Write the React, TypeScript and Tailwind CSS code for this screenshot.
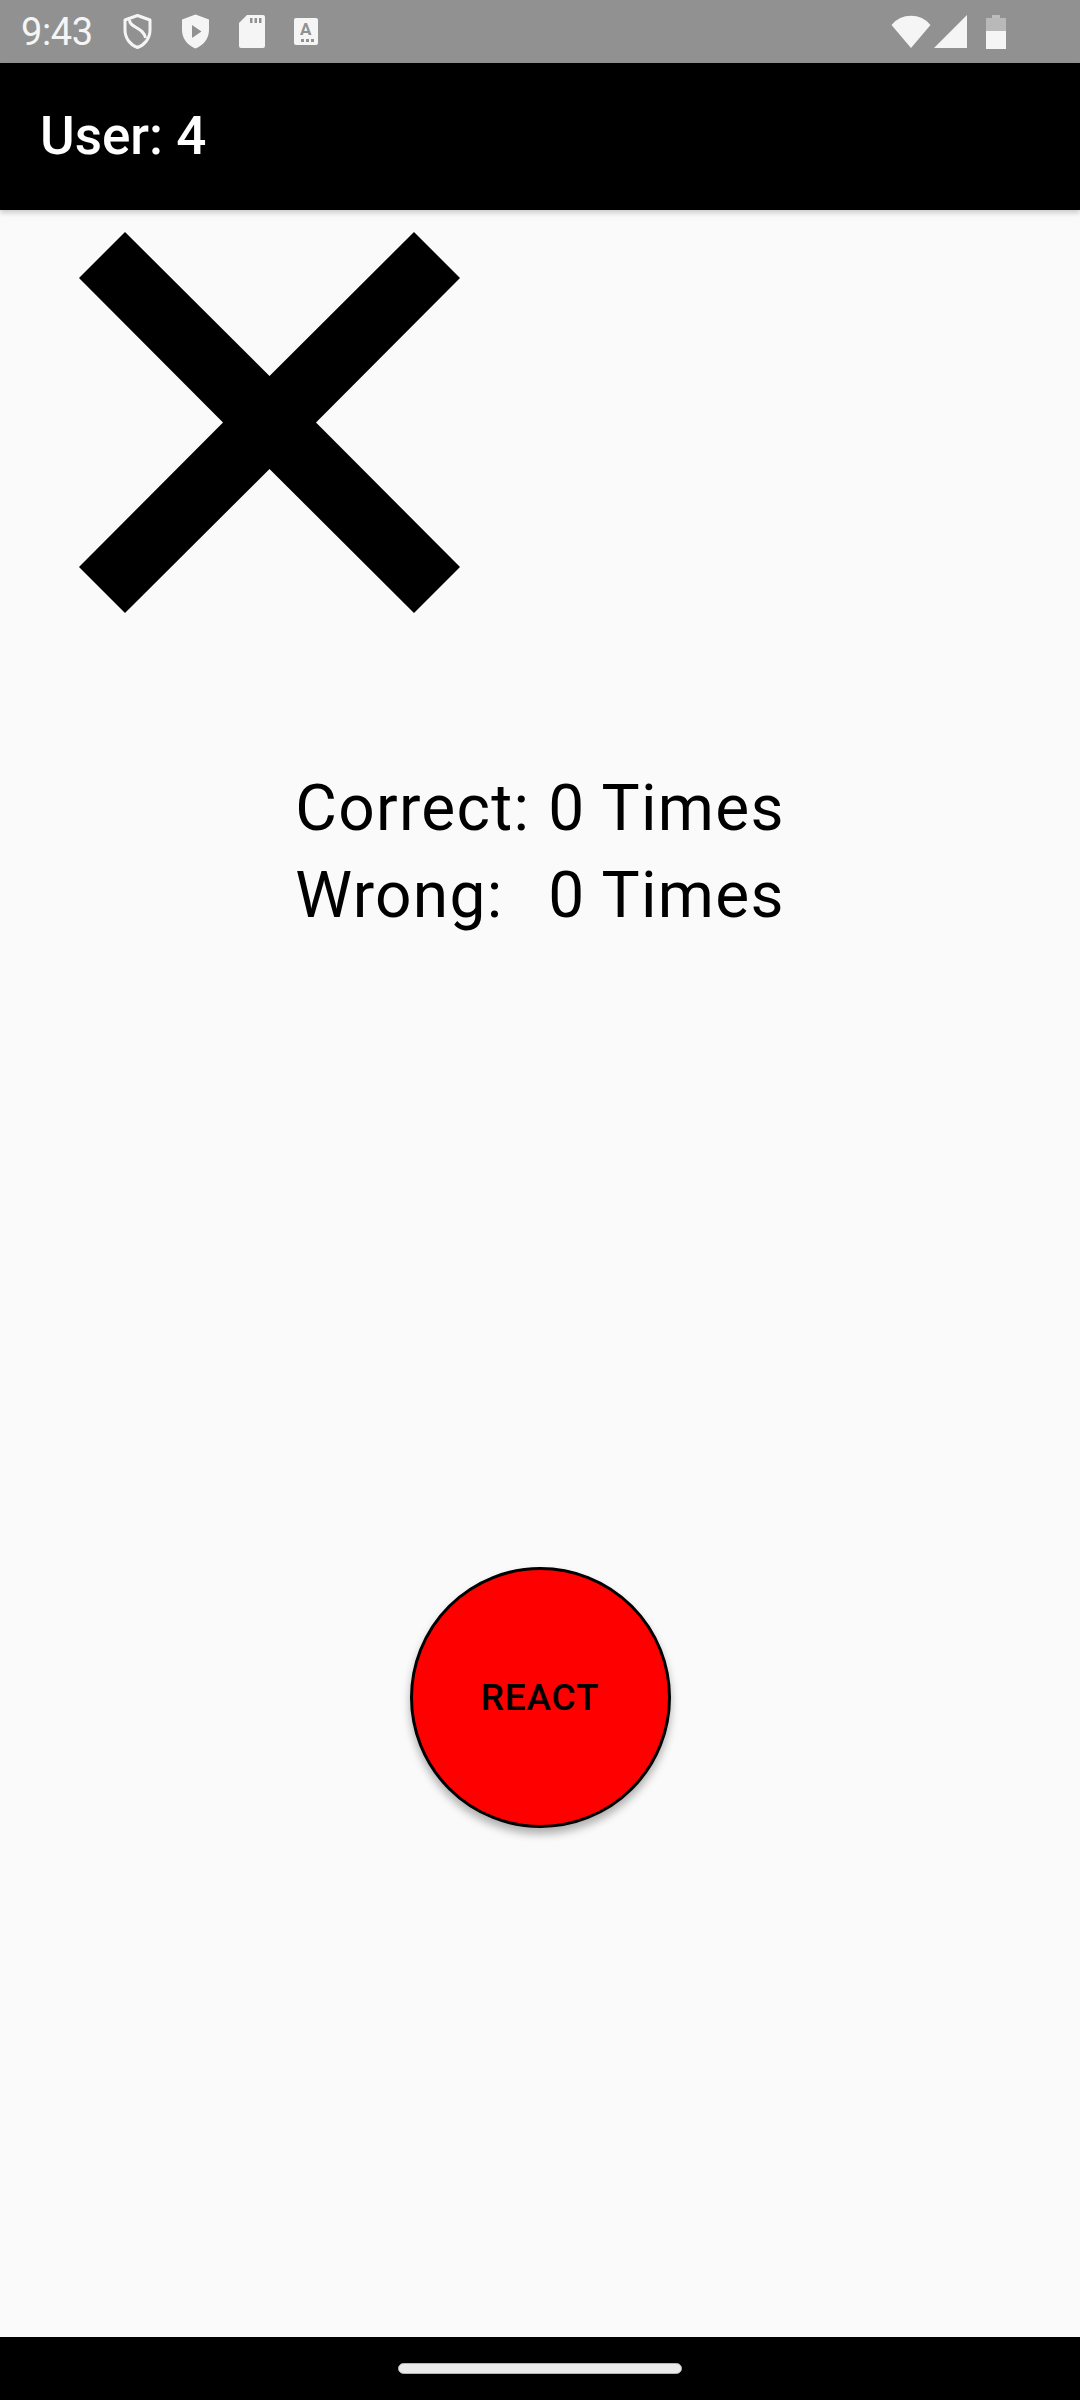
import React from "react";

function StatusBar() {
  return (
    <div className="h-[63px] bg-[#919191] flex items-center pl-[21px] pr-[74px] text-[#f5f5f5]">
      <span className="text-[38px] leading-none font-['Roboto',sans-serif] tracking-[-0.01em]">9:43</span>
      <div className="flex items-center ml-[30px] gap-[29px]">
        {/* shield with S */}
        <svg width="29" height="35" viewBox="0 0 29 35">
          <path d="M14.5 1.5 L27 6 V16 C27 24.5 21.5 31 14.5 33.5 C7.5 31 2 24.5 2 16 V6 Z" fill="none" stroke="#f5f5f5" strokeWidth="3" strokeLinejoin="round" />
          <path d="M6.5 6 C6.5 14 20.5 13 22.5 24" fill="none" stroke="#f5f5f5" strokeWidth="3" />
        </svg>
        {/* shield with play */}
        <svg width="29" height="35" viewBox="0 0 29 35">
          <path d="M14.5 0.5 L28 5.5 V16 C28 25 22 31.5 14.5 34.5 C7 31.5 1 25 1 16 V5.5 Z" fill="#f5f5f5" />
          <path d="M11 11 L20.5 17.5 L11 24 Z" fill="#919191" />
        </svg>
        {/* sd card */}
        <svg width="26" height="33" viewBox="0 0 26 33">
          <path d="M8 0 H24 A2 2 0 0 1 26 2 V31 A2 2 0 0 1 24 33 H2 A2 2 0 0 1 0 31 V8 Z" fill="#f5f5f5" />
          <rect x="11" y="3" width="2.5" height="5" fill="#919191" />
          <rect x="15.5" y="3" width="2.5" height="5" fill="#919191" />
          <rect x="20" y="3" width="2.5" height="5" fill="#919191" />
        </svg>
        {/* A box */}
        <div className="w-[24px] h-[27px] bg-[#f5f5f5] rounded-[2px] flex flex-col items-center justify-start">
          <span className="text-[17px] leading-[18px] mt-[2px] font-bold text-[#919191] font-['Roboto',sans-serif]">A</span>
          <div className="flex gap-[2px] mt-[1px] ml-[4px]">
            <span className="w-[3px] h-[3px] bg-[#919191]" />
            <span className="w-[3px] h-[3px] bg-[#919191]" />
            <span className="w-[3px] h-[3px] bg-[#919191]" />
          </div>
        </div>
      </div>
      <div className="ml-auto flex items-center gap-[3px]">
        <svg width="40" height="33" viewBox="0 0 40 33">
          <path d="M20 33 L0.5 10 A25 25 0 0 1 39.5 10 Z" fill="#f5f5f5" />
        </svg>
        <svg width="33" height="33" viewBox="0 0 33 33">
          <path d="M33 0 V33 H0 Z" fill="#f5f5f5" />
        </svg>
        <svg width="20" height="34" viewBox="0 0 20 34" className="ml-[16px]">
          <rect x="6" y="0" width="8" height="3" fill="#f5f5f5" opacity="0.45" />
          <rect x="0" y="3" width="20" height="13" fill="#f5f5f5" opacity="0.4" />
          <rect x="0" y="16" width="20" height="18" fill="#f5f5f5" />
        </svg>
      </div>
    </div>
  );
}

function CrossMark() {
  return (
    <svg width="381" height="381" viewBox="0 0 381 381">
      <polygon
        points="0,46 46,0 190.5,144 335,0 381,46 237,190.5 381,335 335,381 190.5,237 46,381 0,335 144,190.5"
        fill="#000"
      />
    </svg>
  );
}

export default function App() {
  return (
    <div className="w-[1080px] h-[2400px] flex flex-col bg-[#fafafa] font-['Roboto',sans-serif] overflow-hidden">
      <StatusBar />
      <div className="relative z-10 h-[147px] bg-black flex items-center pl-[40px] shadow-[0_3px_5px_rgba(0,0,0,0.18)]">
        <h1 className="text-white text-[53px] font-medium leading-none">User: 4</h1>
      </div>

      <main className="flex-1 flex flex-col">
        <div className="mt-[22px] ml-[79px]">
          <CrossMark />
        </div>

        <div className="mt-[152px] flex justify-center">
          <div className="grid grid-cols-[auto_auto] gap-x-[18px] text-[64px] tracking-[0.02em] leading-[87px] text-black">
            <span>Correct:</span>
            <span>0 Times</span>
            <span>Wrong:</span>
            <span>0 Times</span>
          </div>
        </div>

        <button className="mt-[628px] mx-auto w-[261px] h-[261px] rounded-full bg-[#ff0000] border-[3px] border-black shadow-[0_6px_8px_rgba(0,0,0,0.3)] flex items-center justify-center">
          <span className="text-[37px] font-medium tracking-[0.02em] text-black leading-none">REACT</span>
        </button>
      </main>

      <div className="h-[63px] bg-black flex items-start justify-center pt-[26px]">
        <div className="w-[284px] h-[11px] rounded-full bg-[#ebebeb] border border-[#b5b5b5]" />
      </div>
    </div>
  );
}
